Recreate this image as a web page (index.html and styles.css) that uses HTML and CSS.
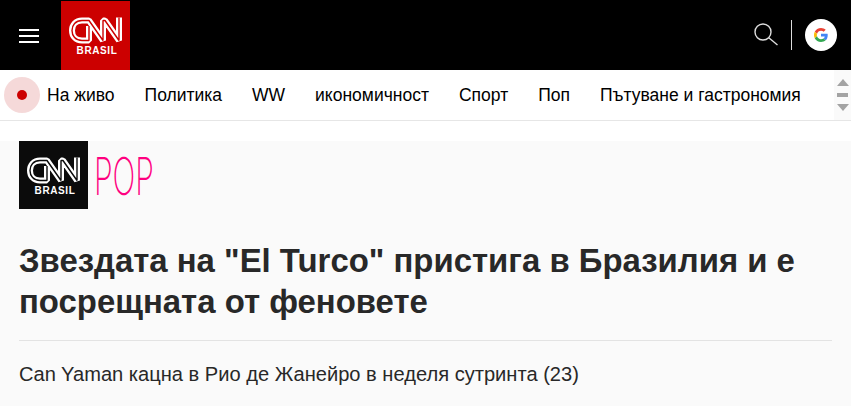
FILE: index.html
```html
<!DOCTYPE html>
<html lang="bg">
<head>
<meta charset="UTF-8" />
<title>CNN Brasil</title>
<link rel="stylesheet" href="styles.css">
</head>
<body>

  <header class="topbar">
    <button class="burger" aria-label="Menu"><span></span><span></span><span></span></button>
    <a class="logo">
      <svg class="cnn" viewBox="0 0 54 27" width="54" height="27">
        <path class="band" d="M20 9V23.500H13C6.500 23.500 3 19 3 13.500S6.500 3.500 13 3.500H20L34 23.500V3.500H36L50 23.500V.5"/>
        <path class="gap" d="M20 9V23.500H13C6.500 23.500 3 19 3 13.500S6.500 3.500 13 3.500H20L34 23.500V3.500H36L50 23.500V.5"/>
      </svg>
      <span class="brasil">BRASIL</span>
    </a>
    <div class="tools">
      <svg class="search" viewBox="0 0 26 26" width="26" height="26">
        <circle cx="10" cy="10" r="8"/>
        <path d="M15.800 15.800L24.500 23"/>
      </svg>
      <span class="divider"></span>
      <span class="google">
        <svg viewBox="0 0 48 48" width="14" height="14">
          <path fill="#EA4335" d="M24 9.500c3.500 0 6.700 1.200 9.200 3.600l6.900-6.900C35.900 2.400 30.500 0 24 0 14.600 0 6.500 5.400 2.600 13.200l8 6.200C12.400 13.700 17.700 9.500 24 9.500z"/>
          <path fill="#4285F4" d="M47 24.500c0-1.600-.1-3.100-.4-4.500H24v9h12.900c-.6 3-2.200 5.500-4.700 7.200l7.700 6C44.400 38.100 47 31.900 47 24.500z"/>
          <path fill="#FBBC05" d="M10.500 28.600c-.5-1.400-.8-3-.8-4.600s.3-3.200.8-4.600l-8-6.200C.9 16.500 0 20.100 0 24s.9 7.500 2.600 10.800l7.900-6.200z"/>
          <path fill="#34A853" d="M24 48c6.500 0 11.900-2.100 15.900-5.800l-7.700-6c-2.100 1.400-4.900 2.300-8.200 2.300-6.300 0-11.600-4.200-13.500-9.900l-8 6.200C6.500 42.600 14.600 48 24 48z"/>
        </svg>
      </span>
    </div>
  </header>

  <nav class="menu">
    <span class="live"><i></i></span>
    <a>На живо</a>
    <a>Политика</a>
    <a>WW</a>
    <a>икономичност</a>
    <a>Спорт</a>
    <a>Поп</a>
    <a>Пътуване и гастрономия</a>
    <div class="scroller">
      <span class="up"></span>
      <span class="mid"></span>
      <span class="down"></span>
    </div>
  </nav>

  <main class="article">
    <div class="section-logo">
      <div class="square">
        <svg class="cnn" viewBox="0 0 54 27" width="54" height="27">
          <path class="band" d="M20 9V23.500H13C6.500 23.500 3 19 3 13.500S6.500 3.500 13 3.500H20L34 23.500V3.500H36L50 23.500V.5"/>
          <path class="gap" d="M20 9V23.500H13C6.500 23.500 3 19 3 13.500S6.500 3.500 13 3.500H20L34 23.500V3.500H36L50 23.500V.5"/>
        </svg>
        <span class="brasil">BRASIL</span>
      </div>
      <span class="pop">POP</span>
    </div>

    <h1>Звездата на "El Turco" пристига в Бразилия и е посрещната от феновете</h1>
    <hr />
    <p class="lead">Can Yaman кацна в Рио де Жанейро в неделя сутринта (23)</p>
  </main>

</body>
</html>
```

FILE: styles.css
```css
* {
  box-sizing: border-box;
}

html, body {
  height: 406px;
  overflow: hidden;
}

body {
  margin: 0;
  background-color: #fff;
  font-family: "Liberation Sans", Arial, sans-serif;
  color: #282828;
}

/* Black bar */
.topbar {
  height: 70px;
  background-color: #000;
  display: flex;
  align-items: flex-start;
  padding-left: 19px;
}

.burger {
  width: 20px;
  height: 14px;
  margin-top: 29px;
  padding: 0;
  background: none;
  border: none;
  display: flex;
  flex-direction: column;
  justify-content: space-between;
}

.burger span {
  display: block;
  height: 1.600px;
  background-color: #fff;
}

.logo {
  width: 69px;
  height: 69px;
  margin-top: 1px;
  margin-left: 22px;
  background-color: #cc0000;
  display: flex;
  flex-direction: column;
  align-items: center;
  padding-top: 16px;
}

.cnn {
  fill: none;
  stroke-linejoin: bevel;
}

.cnn .band {
  stroke: #fff;
  stroke-width: 6;
}

.cnn .gap {
  stroke-width: 1.400;
}

.logo .gap {
  stroke: #cc0000;
}

.square .gap {
  stroke: #0b0b0b;
}

.brasil {
  color: #fff;
  font-size: 10px;
  font-weight: bold;
  letter-spacing: 0.6px;
  line-height: 10px;
  margin-top: 2px;
  margin-left: 3px;
}

.tools {
  margin-left: auto;
  display: flex;
  align-items: center;
  height: 70px;
  padding-right: 14px;
}

.search {
  fill: none;
  stroke: #ddd;
  stroke-width: 1.400;
  margin-right: 12px;
}

.divider {
  width: 1px;
  height: 30px;
  background-color: #ddd;
  margin-right: 13px;
}

.google {
  width: 32px;
  height: 32px;
  border-radius: 50%;
  background-color: #fff;
  display: flex;
  align-items: center;
  justify-content: center;
}

/* Second row */
.menu {
  height: 51px;
  background-color: #fff;
  border-bottom: 1px solid #e6e6e6;
  display: flex;
  align-items: center;
  padding-left: 4px;
  font-size: 17.500px;
  color: #000;
}

.menu a {
  margin-right: 30px;
  white-space: nowrap;
}

.live {
  width: 36px;
  height: 36px;
  border-radius: 50%;
  background-color: #f5d9d9;
  display: flex;
  align-items: center;
  justify-content: center;
  margin-right: 7px;
}

.live i {
  width: 10px;
  height: 10px;
  border-radius: 50%;
  background-color: #cc0000;
}

.scroller {
  margin-left: auto;
  width: 17px;
  height: 50px;
  background-color: #fafafa;
  display: flex;
  flex-direction: column;
  align-items: center;
  justify-content: center;
  gap: 7px;
}

.up {
  border: 6.500px solid transparent;
  border-top: 0;
  border-bottom: 7px solid #a3a3a3;
}

.mid {
  width: 11px;
  height: 4px;
  background-color: #a3a3a3;
}

.down {
  border: 6.500px solid transparent;
  border-bottom: 0;
  border-top: 7px solid #a3a3a3;
}

/* Article */
.article {
  height: 265px;
  background-color: #fafafa;
  margin-top: 20px;
  padding: 0 19px;
}

.section-logo {
  display: flex;
  align-items: flex-start;
}

.square {
  width: 69px;
  height: 68px;
  background-color: #0b0b0b;
  display: flex;
  flex-direction: column;
  align-items: center;
  padding-top: 16px;
}

.pop {
  color: #ff0080;
  font-family: Inter, sans-serif;
  font-weight: 250;
  font-size: 52px;
  line-height: 72px;
  margin-left: 6px;
  transform: scaleX(0.58);
  transform-origin: left center;
}

h1 {
  margin: 27px 0 0;
  font-size: 32.900px;
  line-height: 41px;
  font-weight: bold;
  color: #282828;
}

hr {
  margin: 18px 0 0;
  border: none;
  border-top: 1px solid #e3e3e3;
}

.lead {
  margin: 21px 0 0;
  font-size: 20.100px;
  line-height: 24px;
  color: #282828;
}
```
